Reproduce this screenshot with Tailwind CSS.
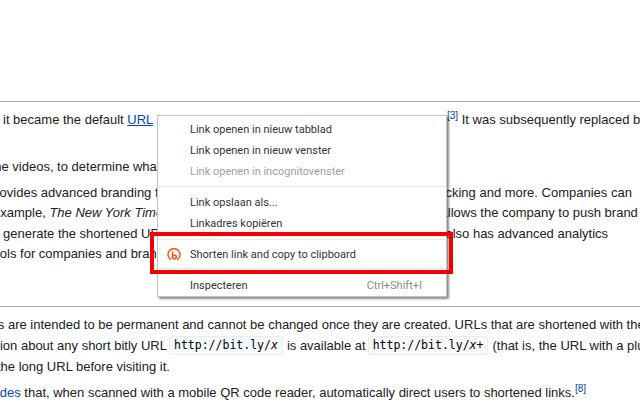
<!DOCTYPE html>
<html lang="en">
<head>
    <meta charset="UTF-8"/>
    <title>Bitly</title>
    <script src="https://cdn.jsdelivr.net/npm/@tailwindcss/browser@4"></script>
</head>
<body class="bg-white">
<div class="relative w-[640px] h-[400px] overflow-hidden bg-white font-['Liberation_Sans',sans-serif] text-[13px] text-[#202122] whitespace-nowrap">
    <!-- Article top -->
    <div class="h-[101px] border-b border-[#a2a9b1] box-content"></div>
    <div class="pt-[7px] h-[21px] box-content leading-[21px] ml-[3px]">it became the default <a class="text-[#0645ad] underline">URL</a> shortening service on twitter.com until <span class="-ml-[5px]">May 6, 2009.</span><sup class="text-[10px] text-[#0645ad]">[3]</sup> It was subsequently replaced by</div>
    <div class="mt-[26px] h-[21px] leading-[21px] -ml-[26px]">online videos, to determine what content works best for marketing</div>
    <div class="mt-[5px] h-[20px] leading-[21px] -ml-[12px]">provides advanced branding features, custom links, mobile deep linking, <span class="-ml-[5px]">click tracking and more. Companies can</span></div>
    <div class="h-[21px] leading-[21px] -ml-[7px]">example, <i>The New York Times</i> uses nyti.ms, a custom domain with Bitly <span class="ml-[5px]">that allows the company to push brand</span></div>
    <div class="h-[20px] leading-[21px] ml-[3px]">generate the shortened URLs automatically for all of their links. <span class="ml-[6px]">The service also has advanced analytics</span></div>
    <div class="h-[21px] leading-[21px] -ml-[11px]">tools for companies and brands to track their audience.</div>

    <!-- Second section -->
    <div class="mt-[42px] border-t border-[#a2a9b1]"></div>
    <div class="mt-[7px] h-[21px] leading-[21px] -ml-[26px]">Links are intended to be permanent and cannot be changed once they are created. URLs that are shortened with the</div>
    <div class="h-[21px] leading-[21px] -ml-[47px] flex items-center w-max">
        <span class="w-[216px] shrink-0">information about any short bitly URL</span>
        <code class="h-[19px] px-[4px] bg-[#f8f9fa] border border-[#eaecf0] rounded-[2px] font-['DejaVu_Sans_Mono',monospace] text-[11.5px] leading-[17px] text-black">http://bit.ly/<i>x</i></code>
        <span class="ml-[4px]">is available at</span>
        <code class="ml-[2px] h-[19px] px-[4px] bg-[#f8f9fa] border border-[#eaecf0] rounded-[2px] font-['DejaVu_Sans_Mono',monospace] text-[11.5px] leading-[17px] text-black">http://bit.ly/<i>x</i>+</code>
        <span class="ml-[4px]">(that is, the URL with a plus</span>
    </div>
    <div class="h-[21px] leading-[21px] -ml-[3px]">the long URL before visiting it.</div>
    <div class="mt-[5px] h-[21px] leading-[21px] -ml-[14px]"><a class="text-[#0645ad]">codes</a> that, when scanned with a mobile QR code reader, automatically direct users to shortened links.<sup class="text-[10px] text-[#0645ad]">[8]</sup></div>

    <!-- Context menu -->
    <div class="absolute left-[157px] top-[115px] w-[290px] h-[182px] bg-white border border-[#c4c4c4] shadow-[2px_2px_2px_rgba(0,0,0,0.45)] font-['Roboto',sans-serif] text-[11px] text-[#333]">
        <div class="pt-[3px] pb-[4px] border-b border-[#e9e9e9]">
            <div class="h-[21px] leading-[21px] pl-[32px]">Link openen in nieuw tabblad</div>
            <div class="h-[21px] leading-[21px] pl-[32px]">Link openen in nieuw venster</div>
            <div class="h-[21px] leading-[21px] pl-[32px] text-[#a0a0a0]">Link openen in incognitovenster</div>
        </div>
        <div class="pt-[5px] pb-[4px]">
            <div class="h-[21px] leading-[21px] pl-[32px]">Link opslaan als...</div>
            <div class="h-[22px] leading-[21px] pl-[32px]">Linkadres kopiëren</div>
        </div>
        <div class="h-[30px] pt-[2px] border-t border-b border-[#e9e9e9] flex items-center pl-[9px]">
            <svg class="w-[14px] h-[14px] mr-[9px]" viewBox="0 0 14 14" fill="none" stroke="#ee6123" stroke-width="1.6">
                <path d="M4 11.8A6 6 0 1 1 10 11.8"/>
                <path d="M5.6 3.5V9"/>
                <circle cx="7.4" cy="9" r="1.9"/>
            </svg>
            <span>Shorten link and copy to clipboard</span>
        </div>
        <div class="mt-[6px] h-[21px] leading-[21px] pl-[32px] pr-[24px] flex justify-between">
            <span>Inspecteren</span>
            <span class="text-[#8a8a8a]">Ctrl+Shift+I</span>
        </div>
    </div>

    <!-- Red highlight -->
    <div class="absolute left-[150px] top-[232px] w-[303px] h-[42px] border-[4px] border-[#f50000]"></div>
</div>
</body>
</html>
